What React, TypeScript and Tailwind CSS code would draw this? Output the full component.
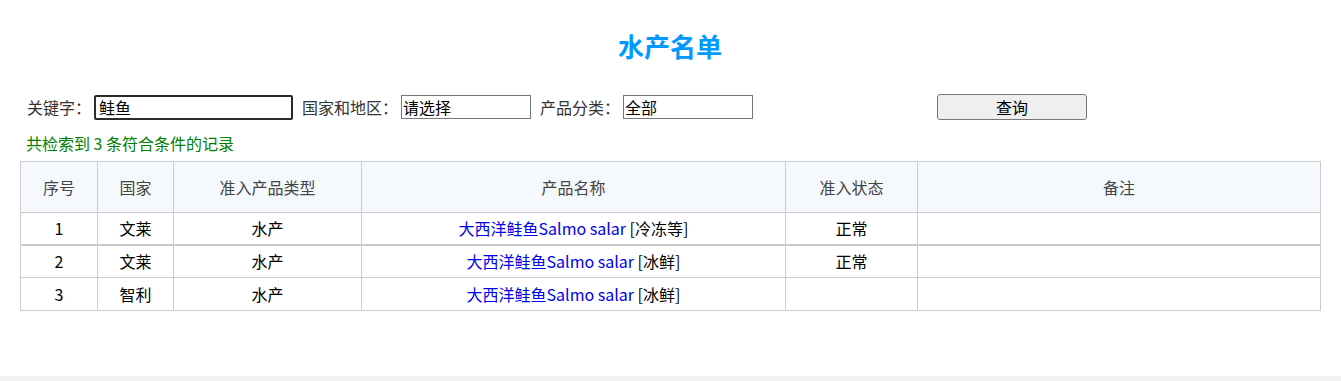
const rows = [
  { id: 1, country: '文莱', type: '水产', name: '大西洋鲑鱼Salmo salar', form: '[冷冻等]', status: '正常' },
  { id: 2, country: '文莱', type: '水产', name: '大西洋鲑鱼Salmo salar', form: '[冰鲜]', status: '正常' },
  { id: 3, country: '智利', type: '水产', name: '大西洋鲑鱼Salmo salar', form: '[冰鲜]', status: '' },
]

export default function App() {
  return (
    <div className="bg-white font-['Noto_Sans_CJK_SC',sans-serif] text-[16px]">
      <div className="px-[20px]">
        <div className="w-[1300px]">
          {/* Title */}
          <h1 className="pt-[31px] text-center text-[26px] leading-[30px] font-bold text-[#0099ff]">水产名单</h1>

          {/* Search form */}
          <div className="mt-[33px] flex items-center pl-[7px] h-[26px] text-[#333] leading-[20px]">
            <label>关键字：</label>
            <input
              type="text"
              defaultValue="鲑鱼"
              className="ml-[3px] w-[199px] h-[25px] border-2 border-[#2b2b2b] rounded-[2px] px-[3px] text-[16px] text-black outline-none"
            />
            <label className="ml-[9px]">国家和地区：</label>
            <input
              type="text"
              defaultValue="请选择"
              className="ml-[3px] w-[130px] h-[24px] border border-[#767676] px-[1px] text-[16px] text-black outline-none"
            />
            <label className="ml-[9px]">产品分类：</label>
            <input
              type="text"
              defaultValue="全部"
              className="ml-[3px] w-[130px] h-[24px] border border-[#767676] px-[1px] text-[16px] text-black outline-none"
            />
            <button
              type="button"
              className="ml-[184px] w-[150px] h-[26px] bg-[#efefef] border border-[#767676] rounded-[3px] text-[16px] text-black leading-[20px]"
            >
              查询
            </button>
          </div>

          {/* Result count */}
          <p className="mt-[11px] pl-[6px] leading-[24px] text-[#008000]">共检索到 3 条符合条件的记录</p>

          {/* Result table */}
          <table className="mt-[6px] w-[1300px] table-fixed border-collapse text-center leading-[20px]">
            <colgroup>
              <col className="w-[77px]" />
              <col className="w-[76px]" />
              <col className="w-[188px]" />
              <col className="w-[424px]" />
              <col className="w-[132px]" />
              <col className="w-[403px]" />
            </colgroup>
            <thead>
              <tr className="h-[51px] bg-[#f5f9fd] text-[#444]">
                <th className="border border-[#cccccc] font-normal">序号</th>
                <th className="border border-[#cccccc] font-normal">国家</th>
                <th className="border border-[#cccccc] font-normal">准入产品类型</th>
                <th className="border border-[#cccccc] font-normal">产品名称</th>
                <th className="border border-[#cccccc] font-normal">准入状态</th>
                <th className="border border-[#cccccc] font-normal">备注</th>
              </tr>
            </thead>
            <tbody className="text-black">
              {rows.map((r, i) => (
                <tr key={r.id} className={i === 0 ? 'h-[32px] border-b-2 border-[#cccccc]' : 'h-[33px]'}>
                  <td className="border border-[#cccccc]">{r.id}</td>
                  <td className="border border-[#cccccc]">{r.country}</td>
                  <td className="border border-[#cccccc]">{r.type}</td>
                  <td className="border border-[#cccccc]">
                    <a href="#" className="text-[#0000ee]">{r.name}</a> {r.form}
                  </td>
                  <td className="border border-[#cccccc]">{r.status}</td>
                  <td className="border border-[#cccccc]"></td>
                </tr>
              ))}
            </tbody>
          </table>
        </div>
      </div>

      {/* Footer strip */}
      <div className="mt-[65px] h-[5px] bg-[#f2f2f2]" />
    </div>
  )
}
